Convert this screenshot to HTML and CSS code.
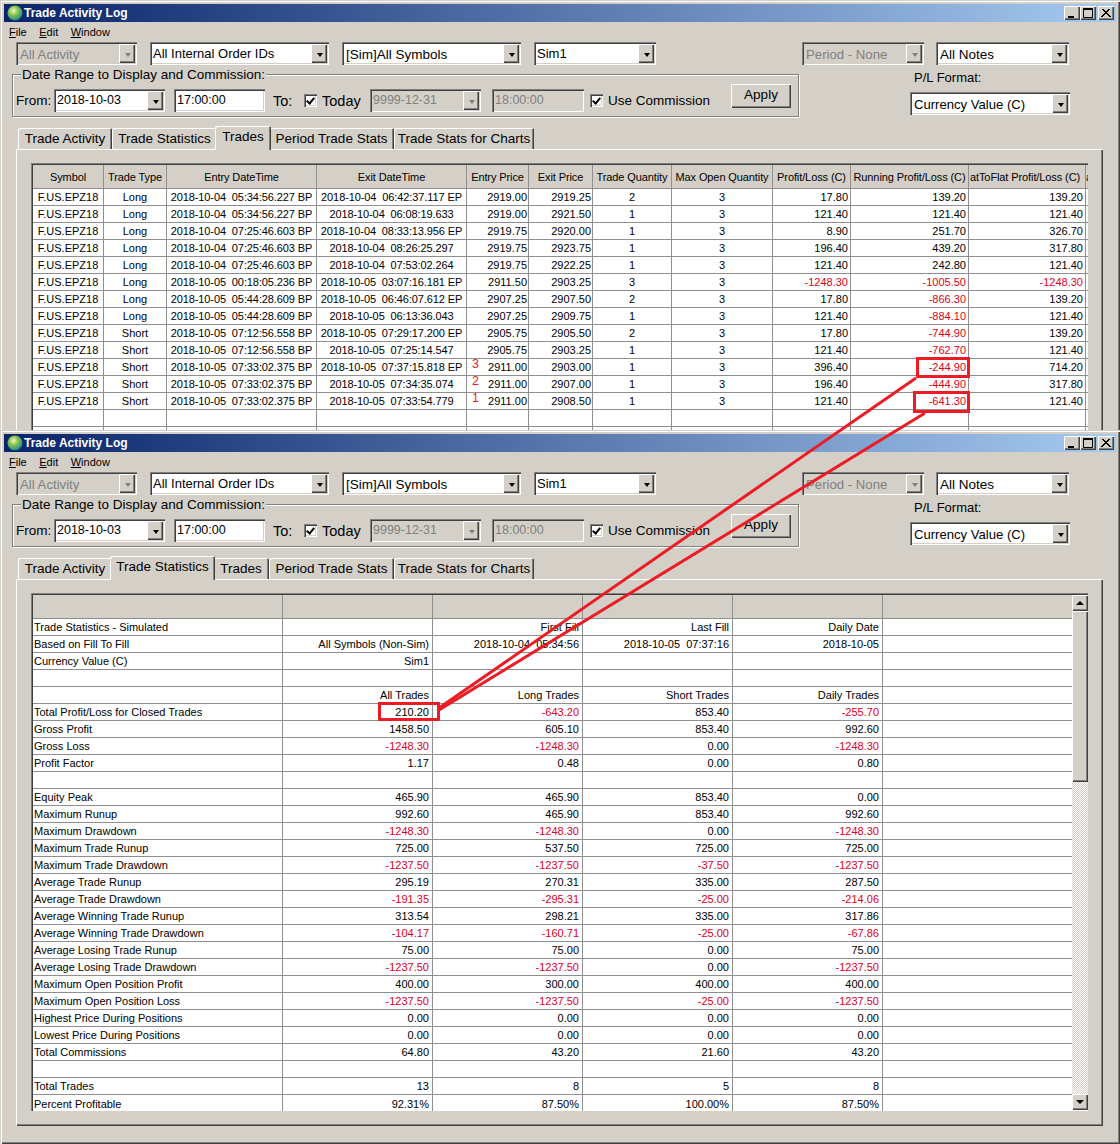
FILE: index.html
```html
<!DOCTYPE html>
<html lang="en">
<head>
    <meta charset="UTF-8">
    <title>Trade Activity Log</title>
    <link rel="stylesheet" href="styles.css">
</head>
<body>
<div class="desktop">

    <!-- Back window: Trades tab -->
    <section class="window window-back">
        <header class="titlebar">
            <svg class="globe" width="16" height="16" viewBox="0 0 16 16"><defs><radialGradient id="g1" cx="0.4" cy="0.35" r="0.75"><stop offset="0" stop-color="#eef8c8"/><stop offset="0.4" stop-color="#86c44a"/><stop offset="0.75" stop-color="#3b9a78"/><stop offset="1" stop-color="#1a5aa0"/></radialGradient></defs><circle cx="8" cy="8" r="7.5" fill="url(#g1)"/></svg>
            <span class="title">Trade Activity Log</span>
            <div class="winbtns">
                <span class="winbtn"><svg width="14" height="12"><rect x="3" y="9" width="6" height="2" fill="#000"/></svg></span>
                <span class="winbtn"><svg width="14" height="12"><path d="M2.5 1.5h9v9h-9z" fill="none" stroke="#000"/><rect x="2" y="1" width="10" height="2" fill="#000"/></svg></span>
                <span class="winbtn winbtn-close"><svg width="14" height="12"><path d="M3 2l8 8M4 2l8 8M11 2l-8 8M10 2l-8 8" stroke="#000" fill="none"/></svg></span>
            </div>
        </header>
        <nav class="menubar"><span><u>F</u>ile</span><span><u>E</u>dit</span><span><u>W</u>indow</span></nav>

        <div class="filters">
            <div class="combo off w-activity">All Activity</div>
            <div class="combo w-orders up">All Internal Order IDs</div>
            <div class="combo w-symbols">[Sim]All Symbols</div>
            <div class="combo w-sim up">Sim1</div>
            <div class="combo off w-period">Period - None</div>
            <div class="combo w-notes">All Notes</div>
        </div>

        <div class="range-row">
            <fieldset class="range">
                <legend>Date Range to Display and Commission:</legend>
                <span class="lbl lbl-from">From:</span>
                <div class="combo w-date up">2018-10-03</div>
                <div class="field w-time up">17:00:00</div>
                <span class="lbl lbl-to">To:</span>
                <span class="check"></span>
                <span class="lbl lbl-today">Today</span>
                <div class="combo off w-date2 up">9999-12-31</div>
                <div class="field off w-time2 up">18:00:00</div>
                <span class="check check-comm"></span>
                <span class="lbl lbl-comm">Use Commission</span>
                <button class="apply">Apply</button>
            </fieldset>
            <div class="plformat">
                <div class="pl-label">P/L Format:</div>
                <div class="combo w-format">Currency Value (C)</div>
            </div>
        </div>

        <div class="tabs">
            <div class="tab t-activity">Trade Activity</div>
            <div class="tab t-stats">Trade Statistics</div>
            <div class="tab t-trades on">Trades</div>
            <div class="tab t-period">Period Trade Stats</div>
            <div class="tab t-charts">Trade Stats for Charts</div>
        </div>
        <div class="pane">
            <div class="gridframe">
                <table class="grid trades">
                    <colgroup>
                        <col class="c71"><col class="c63"><col class="c150"><col class="c150"><col class="c62"><col class="c64"><col class="c79"><col class="c101"><col class="c78"><col class="c118"><col class="c117"><col class="c9">
                    </colgroup>
                    <thead>
                        <tr><th>Symbol</th><th>Trade Type</th><th>Entry DateTime</th><th>Exit DateTime</th><th>Entry Price</th><th>Exit Price</th><th>Trade Quantity</th><th>Max Open Quantity</th><th>Profit/Loss (C)</th><th>Running Profit/Loss (C)</th><th>atToFlat Profit/Loss (C)</th><th>a</th></tr>
                    </thead>
                    <tbody>
                        <tr><td>F.US.EPZ18</td><td>Long</td><td>2018-10-04  05:34:56.227 BP</td><td>2018-10-04  06:42:37.117 EP</td><td>2919.00</td><td>2919.25</td><td>2</td><td>3</td><td>17.80</td><td>139.20</td><td>139.20</td><td></td></tr>
                        <tr><td>F.US.EPZ18</td><td>Long</td><td>2018-10-04  05:34:56.227 BP</td><td>2018-10-04  06:08:19.633</td><td>2919.00</td><td>2921.50</td><td>1</td><td>3</td><td>121.40</td><td>121.40</td><td>121.40</td><td></td></tr>
                        <tr><td>F.US.EPZ18</td><td>Long</td><td>2018-10-04  07:25:46.603 BP</td><td>2018-10-04  08:33:13.956 EP</td><td>2919.75</td><td>2920.00</td><td>1</td><td>3</td><td>8.90</td><td>251.70</td><td>326.70</td><td></td></tr>
                        <tr><td>F.US.EPZ18</td><td>Long</td><td>2018-10-04  07:25:46.603 BP</td><td>2018-10-04  08:26:25.297</td><td>2919.75</td><td>2923.75</td><td>1</td><td>3</td><td>196.40</td><td>439.20</td><td>317.80</td><td></td></tr>
                        <tr><td>F.US.EPZ18</td><td>Long</td><td>2018-10-04  07:25:46.603 BP</td><td>2018-10-04  07:53:02.264</td><td>2919.75</td><td>2922.25</td><td>1</td><td>3</td><td>121.40</td><td>242.80</td><td>121.40</td><td></td></tr>
                        <tr><td>F.US.EPZ18</td><td>Long</td><td>2018-10-05  00:18:05.236 BP</td><td>2018-10-05  03:07:16.181 EP</td><td>2911.50</td><td>2903.25</td><td>3</td><td>3</td><td class="neg">-1248.30</td><td class="neg">-1005.50</td><td class="neg">-1248.30</td><td></td></tr>
                        <tr><td>F.US.EPZ18</td><td>Long</td><td>2018-10-05  05:44:28.609 BP</td><td>2018-10-05  06:46:07.612 EP</td><td>2907.25</td><td>2907.50</td><td>2</td><td>3</td><td>17.80</td><td class="neg">-866.30</td><td>139.20</td><td></td></tr>
                        <tr><td>F.US.EPZ18</td><td>Long</td><td>2018-10-05  05:44:28.609 BP</td><td>2018-10-05  06:13:36.043</td><td>2907.25</td><td>2909.75</td><td>1</td><td>3</td><td>121.40</td><td class="neg">-884.10</td><td>121.40</td><td></td></tr>
                        <tr><td>F.US.EPZ18</td><td>Short</td><td>2018-10-05  07:12:56.558 BP</td><td>2018-10-05  07:29:17.200 EP</td><td>2905.75</td><td>2905.50</td><td>2</td><td>3</td><td>17.80</td><td class="neg">-744.90</td><td>139.20</td><td></td></tr>
                        <tr><td>F.US.EPZ18</td><td>Short</td><td>2018-10-05  07:12:56.558 BP</td><td>2018-10-05  07:25:14.547</td><td>2905.75</td><td>2903.25</td><td>1</td><td>3</td><td>121.40</td><td class="neg">-762.70</td><td>121.40</td><td></td></tr>
                        <tr><td>F.US.EPZ18</td><td>Short</td><td>2018-10-05  07:33:02.375 BP</td><td>2018-10-05  07:37:15.818 EP</td><td><span class="mark">3</span>2911.00</td><td>2903.00</td><td>1</td><td>3</td><td>396.40</td><td class="neg">-244.90</td><td>714.20</td><td></td></tr>
                        <tr><td>F.US.EPZ18</td><td>Short</td><td>2018-10-05  07:33:02.375 BP</td><td>2018-10-05  07:34:35.074</td><td><span class="mark">2</span>2911.00</td><td>2907.00</td><td>1</td><td>3</td><td>196.40</td><td class="neg">-444.90</td><td>317.80</td><td></td></tr>
                        <tr><td>F.US.EPZ18</td><td>Short</td><td>2018-10-05  07:33:02.375 BP</td><td>2018-10-05  07:33:54.779</td><td><span class="mark">1</span>2911.00</td><td>2908.50</td><td>1</td><td>3</td><td>121.40</td><td class="neg">-641.30</td><td>121.40</td><td></td></tr>
                        <tr><td></td><td></td><td></td><td></td><td></td><td></td><td></td><td></td><td></td><td></td><td></td><td></td></tr>
                        <tr><td></td><td></td><td></td><td></td><td></td><td></td><td></td><td></td><td></td><td></td><td></td><td></td></tr>
                    </tbody>
                </table>
            </div>
        </div>
    </section>

    <!-- Front window: Trade Statistics tab -->
    <section class="window window-front">
        <header class="titlebar">
            <svg class="globe" width="16" height="16" viewBox="0 0 16 16"><circle cx="8" cy="8" r="7.5" fill="url(#g1)"/></svg>
            <span class="title">Trade Activity Log</span>
            <div class="winbtns">
                <span class="winbtn"><svg width="14" height="12"><rect x="3" y="9" width="6" height="2" fill="#000"/></svg></span>
                <span class="winbtn"><svg width="14" height="12"><path d="M2.5 1.5h9v9h-9z" fill="none" stroke="#000"/><rect x="2" y="1" width="10" height="2" fill="#000"/></svg></span>
                <span class="winbtn winbtn-close"><svg width="14" height="12"><path d="M3 2l8 8M4 2l8 8M11 2l-8 8M10 2l-8 8" stroke="#000" fill="none"/></svg></span>
            </div>
        </header>
        <nav class="menubar"><span><u>F</u>ile</span><span><u>E</u>dit</span><span><u>W</u>indow</span></nav>

        <div class="filters">
            <div class="combo off w-activity">All Activity</div>
            <div class="combo w-orders up">All Internal Order IDs</div>
            <div class="combo w-symbols">[Sim]All Symbols</div>
            <div class="combo w-sim up">Sim1</div>
            <div class="combo off w-period">Period - None</div>
            <div class="combo w-notes">All Notes</div>
        </div>

        <div class="range-row">
            <fieldset class="range">
                <legend>Date Range to Display and Commission:</legend>
                <span class="lbl lbl-from">From:</span>
                <div class="combo w-date up">2018-10-03</div>
                <div class="field w-time up">17:00:00</div>
                <span class="lbl lbl-to">To:</span>
                <span class="check"></span>
                <span class="lbl lbl-today">Today</span>
                <div class="combo off w-date2 up">9999-12-31</div>
                <div class="field off w-time2 up">18:00:00</div>
                <span class="check check-comm"></span>
                <span class="lbl lbl-comm">Use Commission</span>
                <button class="apply">Apply</button>
            </fieldset>
            <div class="plformat">
                <div class="pl-label">P/L Format:</div>
                <div class="combo w-format">Currency Value (C)</div>
            </div>
        </div>

        <div class="tabs">
            <div class="tab t-activity">Trade Activity</div>
            <div class="tab t-stats on">Trade Statistics</div>
            <div class="tab t-trades">Trades</div>
            <div class="tab t-period">Period Trade Stats</div>
            <div class="tab t-charts">Trade Stats for Charts</div>
        </div>
        <div class="pane pane-stats">
            <div class="gridframe gridframe-stats">
                <table class="grid stats">
                    <colgroup>
                        <col class="c250"><col class="c150"><col class="c150"><col class="c150"><col class="c150"><col>
                    </colgroup>
                    <thead><tr><th></th><th></th><th></th><th></th><th></th><th></th></tr></thead>
                    <tbody>
                        <tr><td>Trade Statistics - Simulated</td><td></td><td>First Fill</td><td>Last Fill</td><td>Daily Date</td><td></td></tr>
                        <tr><td>Based on Fill To Fill</td><td>All Symbols (Non-Sim)</td><td>2018-10-04  05:34:56</td><td>2018-10-05  07:37:16</td><td>2018-10-05</td><td></td></tr>
                        <tr><td>Currency Value (C)</td><td>Sim1</td><td></td><td></td><td></td><td></td></tr>
                        <tr><td></td><td></td><td></td><td></td><td></td><td></td></tr>
                        <tr><td></td><td>All Trades</td><td>Long Trades</td><td>Short Trades</td><td>Daily Trades</td><td></td></tr>
                        <tr><td>Total Profit/Loss for Closed Trades</td><td>210.20</td><td class="neg">-643.20</td><td>853.40</td><td class="neg">-255.70</td><td></td></tr>
                        <tr><td>Gross Profit</td><td>1458.50</td><td>605.10</td><td>853.40</td><td>992.60</td><td></td></tr>
                        <tr><td>Gross Loss</td><td class="neg">-1248.30</td><td class="neg">-1248.30</td><td>0.00</td><td class="neg">-1248.30</td><td></td></tr>
                        <tr><td>Profit Factor</td><td>1.17</td><td>0.48</td><td>0.00</td><td>0.80</td><td></td></tr>
                        <tr><td></td><td></td><td></td><td></td><td></td><td></td></tr>
                        <tr><td>Equity Peak</td><td>465.90</td><td>465.90</td><td>853.40</td><td>0.00</td><td></td></tr>
                        <tr><td>Maximum Runup</td><td>992.60</td><td>465.90</td><td>853.40</td><td>992.60</td><td></td></tr>
                        <tr><td>Maximum Drawdown</td><td class="neg">-1248.30</td><td class="neg">-1248.30</td><td>0.00</td><td class="neg">-1248.30</td><td></td></tr>
                        <tr><td>Maximum Trade Runup</td><td>725.00</td><td>537.50</td><td>725.00</td><td>725.00</td><td></td></tr>
                        <tr><td>Maximum Trade Drawdown</td><td class="neg">-1237.50</td><td class="neg">-1237.50</td><td class="neg">-37.50</td><td class="neg">-1237.50</td><td></td></tr>
                        <tr><td>Average Trade Runup</td><td>295.19</td><td>270.31</td><td>335.00</td><td>287.50</td><td></td></tr>
                        <tr><td>Average Trade Drawdown</td><td class="neg">-191.35</td><td class="neg">-295.31</td><td class="neg">-25.00</td><td class="neg">-214.06</td><td></td></tr>
                        <tr><td>Average Winning Trade Runup</td><td>313.54</td><td>298.21</td><td>335.00</td><td>317.86</td><td></td></tr>
                        <tr><td>Average Winning Trade Drawdown</td><td class="neg">-104.17</td><td class="neg">-160.71</td><td class="neg">-25.00</td><td class="neg">-67.86</td><td></td></tr>
                        <tr><td>Average Losing Trade Runup</td><td>75.00</td><td>75.00</td><td>0.00</td><td>75.00</td><td></td></tr>
                        <tr><td>Average Losing Trade Drawdown</td><td class="neg">-1237.50</td><td class="neg">-1237.50</td><td>0.00</td><td class="neg">-1237.50</td><td></td></tr>
                        <tr><td>Maximum Open Position Profit</td><td>400.00</td><td>300.00</td><td>400.00</td><td>400.00</td><td></td></tr>
                        <tr><td>Maximum Open Position Loss</td><td class="neg">-1237.50</td><td class="neg">-1237.50</td><td class="neg">-25.00</td><td class="neg">-1237.50</td><td></td></tr>
                        <tr><td>Highest Price During Positions</td><td>0.00</td><td>0.00</td><td>0.00</td><td>0.00</td><td></td></tr>
                        <tr><td>Lowest Price During Positions</td><td>0.00</td><td>0.00</td><td>0.00</td><td>0.00</td><td></td></tr>
                        <tr><td>Total Commissions</td><td>64.80</td><td>43.20</td><td>21.60</td><td>43.20</td><td></td></tr>
                        <tr><td></td><td></td><td></td><td></td><td></td><td></td></tr>
                        <tr><td>Total Trades</td><td>13</td><td>8</td><td>5</td><td>8</td><td></td></tr>
                        <tr class="last"><td>Percent Profitable</td><td>92.31%</td><td>87.50%</td><td>100.00%</td><td>87.50%</td><td></td></tr>
                    </tbody>
                </table>
                <div class="scrollbar">
                    <span class="sb-btn sb-up"></span>
                    <span class="sb-thumb"></span>
                    <span class="sb-track"></span>
                    <span class="sb-btn sb-down"></span>
                </div>
            </div>
        </div>
    </section>

    <!-- Red annotation drawn over both windows -->
    <svg class="notes" width="1120" height="1144" viewBox="0 0 1120 1144">
        <g fill="none" stroke="#ed1c24" stroke-width="3">
            <rect x="917.5" y="358.5" width="51" height="18"/>
            <rect x="914.5" y="392.5" width="54" height="19"/>
            <rect x="379.5" y="703.5" width="59" height="16"/>
            <path d="M916 378L439 708"/>
            <path d="M925 413L439 710"/>
        </g>
    </svg>
</div>
</body>
</html>
```

FILE: styles.css
```css
/* Classic Windows look */
html, body {
    margin: 0;
    padding: 0;
    background: #d4d0c8;
}

body {
    font-family: "Liberation Sans", Arial, sans-serif;
    font-size: 13.5px;
    color: #000;
}

.desktop {
    position: relative;
    width: 1120px;
    height: 1144px;
    overflow: hidden;
}

/* Windows */
.window {
    position: absolute;
    left: 0;
    width: 1120px;
    box-sizing: border-box;
    padding: 4px;
    background: #d4d0c8;
    display: flex;
    flex-direction: column;
    box-shadow: inset 1px 1px 0 #d4d0c8, inset 2px 2px 0 #fff, inset -1px -1px 0 #404040, inset -2px -2px 0 #808080;
}

.window-back {
    top: 0;
    height: 470px;
}

.window-front {
    top: 430px;
    height: 714px;
}

.notes {
    position: absolute;
    left: 0;
    top: 0;
}

/* Title bar */
.titlebar {
    height: 18px;
    flex: none;
    display: flex;
    align-items: center;
    background: linear-gradient(to right, #0a246a, #a6caf0);
    color: #fff;
    font-size: 12px;
    font-weight: bold;
    padding-left: 3px;
    padding-right: 2px;
}

.globe {
    margin-right: 1px;
}

.winbtns {
    margin-left: auto;
    display: flex;
}

.winbtn {
    width: 16px;
    height: 14px;
    box-sizing: border-box;
    background: #d4d0c8;
    box-shadow: inset 1px 1px 0 #fff, inset -1px -1px 0 #404040, inset -2px -2px 0 #808080;
    display: flex;
    align-items: center;
    justify-content: center;
}

.winbtn-close {
    margin-left: 2px;
}

/* Menu */
.menubar {
    height: 20px;
    flex: none;
    display: flex;
    gap: 12.5px;
    align-items: center;
    padding-left: 5px;
    font-size: 11px;
}

/* Combos and fields */
.filters {
    display: flex;
    height: 23px;
    flex: none;
    padding-left: 12px;
}

.combo, .field {
    position: relative;
    box-sizing: border-box;
    height: 23px;
    line-height: 19px;
    padding: 3px 20px 0 4px;
    background: #fff;
    white-space: nowrap;
    flex: none;
    box-shadow: inset 1px 1px 0 #808080, inset 2px 2px 0 #404040, inset -1px -1px 0 #fff, inset -2px -2px 0 #d4d0c8;
}

.combo.up, .field.up {
    font-size: 13px;
    padding-top: 2px;
    padding-left: 3px;
}

.combo::after {
    content: "";
    position: absolute;
    right: 2px;
    top: 2px;
    width: 16px;
    height: 19px;
    background: #d4d0c8;
    box-shadow: inset 1px 1px 0 #fff, inset -1px -1px 0 #404040, inset -2px -2px 0 #808080;
}

.combo::before {
    content: "";
    position: absolute;
    z-index: 1;
    right: 6.5px;
    top: 11px;
    width: 0;
    height: 0;
    border-top: 4px solid #000;
    border-left: 3.5px solid transparent;
    border-right: 3.5px solid transparent;
}

.off {
    background: #d4d0c8;
    color: #808080;
}

.combo.off::before {
    border-top-color: #808080;
}

.w-activity { width: 121px; margin-right: 13px; font-size: 13.2px; }
.w-orders { width: 179px; margin-right: 13px; }
.w-symbols { width: 179px; margin-right: 13px; }
.w-sim { width: 122px; margin-right: 146px; }
.w-period { width: 122px; margin-right: 12px; font-size: 13.2px; }
.w-notes { width: 133px; }

/* Date range group */
.range-row {
    display: flex;
    align-items: flex-start;
    flex: none;
    height: 52px;
    padding-left: 8px;
}

.range {
    box-sizing: border-box;
    width: 787px;
    height: 52px;
    margin: 0;
    padding: 0 0 0 3px;
    display: flex;
    align-items: center;
    border: 1px solid #808080;
    box-shadow: 1px 1px 0 #fff, inset 1px 1px 0 #fff;
    flex: none;
}

.range legend {
    padding: 0 1px;
    margin-left: 5px;
    line-height: 19px;
    background: #d4d0c8;
}

.lbl {
    flex: none;
    padding-top: 1px;
}

.lbl-from { width: 38px; }
.lbl-to { width: 20px; margin-left: 8px; font-size: 14.5px; }
.lbl-today { width: 39px; margin-left: 5px; font-size: 14.5px; }
.lbl-comm { margin-left: 5px; }

.combo.w-date { width: 111px; font-size: 12.5px; }
.field.w-time { width: 91px; margin-left: 9px; font-size: 12.5px; }
.combo.w-date2 { width: 111px; margin-left: 9px; font-size: 12.5px; }
.field.w-time2 { width: 92px; margin-left: 11px; font-size: 12.5px; }

.check {
    position: relative;
    box-sizing: border-box;
    width: 13px;
    height: 13px;
    margin-left: 11px;
    background: #fff;
    flex: none;
    box-shadow: inset 1px 1px 0 #808080, inset 2px 2px 0 #404040, inset -1px -1px 0 #fff, inset -2px -2px 0 #d4d0c8;
}

.check::after {
    content: "";
    position: absolute;
    left: 4px;
    top: 2px;
    width: 3px;
    height: 6px;
    border-right: 2px solid #000;
    border-bottom: 2px solid #000;
    transform: rotate(40deg);
}

.check.check-comm { margin-left: 6px; }

.apply {
    width: 60px;
    height: 24px;
    margin: -9px 7px 0 auto;
    padding: 0 0 2px;
    border: 0;
    background: #d4d0c8;
    font: inherit;
    color: #000;
    box-shadow: inset 1px 1px 0 #fff, inset -1px -1px 0 #404040, inset -2px -2px 0 #808080;
}

.plformat {
    margin-left: 111px;
    width: 160px;
    margin-top: 5px;
}

.pl-label {
    height: 22px;
    line-height: 16px;
    padding-left: 4px;
    font-size: 13px;
}

.combo.w-format {
    width: 160px;
    font-size: 13.1px;
}

/* Tabs */
.tabs {
    display: flex;
    align-items: flex-end;
    height: 24px;
    flex: none;
    margin-top: 9px;
    padding-left: 14px;
    position: relative;
    z-index: 1;
}

.tab {
    box-sizing: border-box;
    height: 21px;
    line-height: 22px;
    text-align: center;
    white-space: nowrap;
    background: #d4d0c8;
    border-radius: 2px 2px 0 0;
    box-shadow: inset 1px 1px 0 #fff, inset -1px 0 0 #404040, inset -2px 0 0 #808080;
    margin-bottom: 1px;
}

.tab.on {
    height: 24px;
    line-height: 22px;
    margin: 0 -2px;
    position: relative;
    z-index: 1;
}

.t-activity { width: 94px; }
.t-stats { width: 105px; }
.t-trades { width: 56px; }
.t-period { width: 125px; }
.t-charts { width: 140px; }

.pane {
    flex: 1;
    margin-left: 12px;
    width: 1087px;
    box-sizing: border-box;
    padding: 14px 0 0 15px;
    margin-top: -1px;
    min-height: 0;
    box-shadow: inset 1px 1px 0 #fff, inset -1px -1px 0 #404040, inset -2px -2px 0 #808080;
}

.pane-stats {
    margin-bottom: 14px;
    padding-bottom: 15px;
}

/* Grids */
.gridframe {
    box-sizing: border-box;
    width: 1057px;
    height: 100%;
    padding: 2px 1px 1px 2px;
    overflow: hidden;
    box-shadow: inset 1px 1px 0 #808080, inset 2px 2px 0 #404040, inset -1px -1px 0 #fff;
}

.gridframe-stats {
    display: flex;
    box-shadow: inset 1px 1px 0 #808080, inset 2px 2px 0 #404040, inset -1px -1px 0 #fff, inset 0 -1px 0 #d4d0c8;
}

.grid {
    table-layout: fixed;
    border-collapse: separate;
    border-spacing: 0;
    width: 1054px;
    font-size: 11px;
    flex: none;
    align-self: flex-start;
}

.stats {
    width: 1039px;
}

.grid th, .grid td {
    height: 17px;
    box-sizing: border-box;
    padding: 0 2px;
    overflow: hidden;
    white-space: pre;
    border-right: 1px solid #8f8f8f;
    border-bottom: 1px solid #8f8f8f;
    font-weight: normal;
    line-height: 14px;
}

.grid th {
    height: 24px;
    background: #d4d0c8;
    text-align: center;
    letter-spacing: -0.1px;
}

.grid td {
    background: #fff;
    text-align: right;
}

.trades td:nth-child(-n+4), .trades td:nth-child(7), .trades td:nth-child(8) {
    text-align: center;
}

.trades td:nth-child(3), .trades td:nth-child(4) {
    letter-spacing: -0.1px;
}

.trades td:nth-child(5), .trades td:nth-child(6) {
    padding-right: 1px;
}

.trades th:nth-child(11) {
    text-align: left;
    padding: 0 0 0 1px;
}

.trades th:nth-child(12) {
    text-align: left;
    padding: 0;
}

.stats td {
    padding-right: 3px;
}

.stats td:first-child {
    text-align: left;
    padding-left: 1px;
}

.stats th:last-child, .stats td:last-child {
    border-right: 0;
}

.stats .last td {
    border-bottom: 0;
}

.neg {
    color: #dc0020;
}

.mark {
    float: left;
    color: #ed1c24;
    font-size: 12.5px;
    line-height: 13px;
    margin: -2px 0 0 3px;
}

.c71 { width: 71px; }
.c63 { width: 63px; }
.c150 { width: 150px; }
.c62 { width: 62px; }
.c64 { width: 64px; }
.c79 { width: 79px; }
.c101 { width: 101px; }
.c78 { width: 78px; }
.c118 { width: 118px; }
.c117 { width: 117px; }
.c9 { width: 9px; }
.c250 { width: 250px; }

/* Scrollbar */
.scrollbar {
    width: 16px;
    flex: none;
    display: flex;
    flex-direction: column;
}

.sb-btn, .sb-thumb {
    flex: none;
    background: #d4d0c8;
    box-shadow: inset 1px 1px 0 #fff, inset -1px -1px 0 #404040, inset -2px -2px 0 #808080;
    display: block;
    position: relative;
}

.sb-btn {
    height: 16px;
}

.sb-thumb {
    height: 171px;
}

.sb-track {
    flex: 1;
    background: conic-gradient(#d4d0c8 25%, #fff 0 50%, #d4d0c8 0 75%, #fff 0) 0 0 / 2px 2px;
}

.sb-btn::after {
    content: "";
    position: absolute;
    left: 4px;
    top: 6px;
    border-left: 4px solid transparent;
    border-right: 4px solid transparent;
}

.sb-up::after { border-bottom: 4px solid #000; }
.sb-down::after { border-top: 4px solid #000; }
```
